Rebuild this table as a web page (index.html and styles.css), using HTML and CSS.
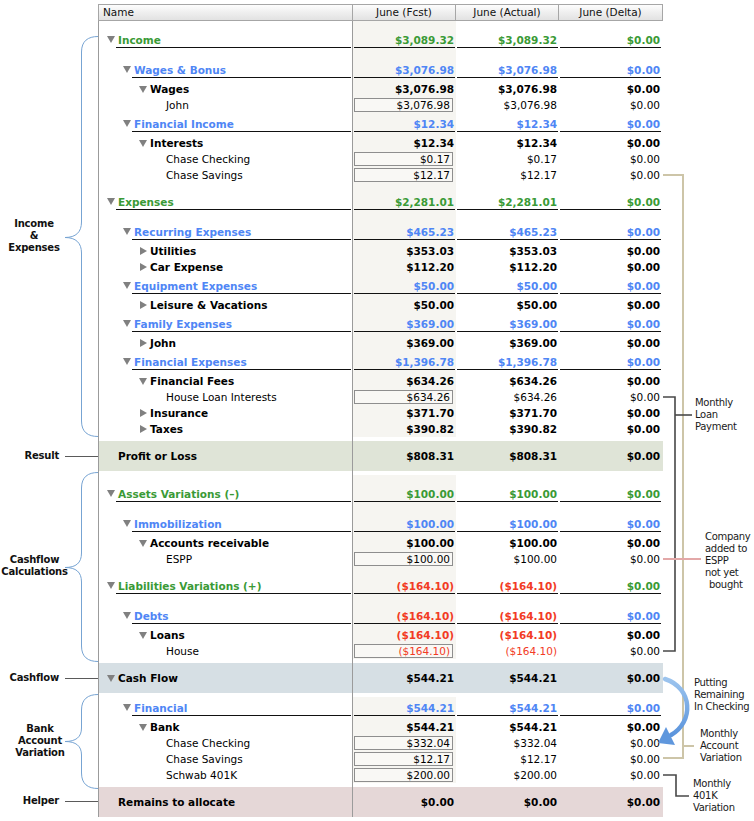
FILE: index.html
```html
<!DOCTYPE html>
<html lang="en">
<head>
<meta charset="utf-8">
<title>Budget</title>
<link rel="stylesheet" href="styles.css">
</head>
<body>
<div class="page">
  <div class="sheet">
    <div class="head">
      <div class="hc hn">Name</div>
      <div class="hc">June (Fcst)</div>
      <div class="hc">June (Actual)</div>
      <div class="hc hl">June (Delta)</div>
    </div>
    <div class="tbody">
      <div class="row u g grn"><div class="nm l0"><i class="tri dn"></i><div class="ul">Income</div></div><div class="v fc"><div class="ul">$3,089.32</div></div><div class="v"><div class="ul">$3,089.32</div></div><div class="v dl"><div class="ul">$0.00</div></div></div>
      <div class="row u blu"><div class="nm l1"><i class="tri dn"></i><div class="ul">Wages &amp; Bonus</div></div><div class="v fc"><div class="ul">$3,076.98</div></div><div class="v"><div class="ul">$3,076.98</div></div><div class="v dl"><div class="ul">$0.00</div></div></div>
      <div class="row n k"><div class="nm l2"><i class="tri dn"></i><div class="lb">Wages</div></div><div class="v fc">$3,076.98</div><div class="v">$3,076.98</div><div class="v dl">$0.00</div></div>
      <div class="row n"><div class="nm l3"><i class="sp"></i><div class="lb">John</div></div><div class="v fc"><div class="box">$3,076.98</div></div><div class="v">$3,076.98</div><div class="v dl">$0.00</div></div>
      <div class="row u blu"><div class="nm l1"><i class="tri dn"></i><div class="ul">Financial Income</div></div><div class="v fc"><div class="ul">$12.34</div></div><div class="v"><div class="ul">$12.34</div></div><div class="v dl"><div class="ul">$0.00</div></div></div>
      <div class="row n k"><div class="nm l2"><i class="tri dn"></i><div class="lb">Interests</div></div><div class="v fc">$12.34</div><div class="v">$12.34</div><div class="v dl">$0.00</div></div>
      <div class="row n"><div class="nm l3"><i class="sp"></i><div class="lb">Chase Checking</div></div><div class="v fc"><div class="box">$0.17</div></div><div class="v">$0.17</div><div class="v dl">$0.00</div></div>
      <div class="row n"><div class="nm l3"><i class="sp"></i><div class="lb">Chase Savings</div></div><div class="v fc"><div class="box">$12.17</div></div><div class="v">$12.17</div><div class="v dl">$0.00</div></div>

      <div class="row u g grn"><div class="nm l0"><i class="tri dn"></i><div class="ul">Expenses</div></div><div class="v fc"><div class="ul">$2,281.01</div></div><div class="v"><div class="ul">$2,281.01</div></div><div class="v dl"><div class="ul">$0.00</div></div></div>
      <div class="row u blu"><div class="nm l1"><i class="tri dn"></i><div class="ul">Recurring Expenses</div></div><div class="v fc"><div class="ul">$465.23</div></div><div class="v"><div class="ul">$465.23</div></div><div class="v dl"><div class="ul">$0.00</div></div></div>
      <div class="row n k"><div class="nm l2"><i class="tri rt"></i><div class="lb">Utilities</div></div><div class="v fc">$353.03</div><div class="v">$353.03</div><div class="v dl">$0.00</div></div>
      <div class="row n k"><div class="nm l2"><i class="tri rt"></i><div class="lb">Car Expense</div></div><div class="v fc">$112.20</div><div class="v">$112.20</div><div class="v dl">$0.00</div></div>
      <div class="row u blu"><div class="nm l1"><i class="tri dn"></i><div class="ul">Equipment Expenses</div></div><div class="v fc"><div class="ul">$50.00</div></div><div class="v"><div class="ul">$50.00</div></div><div class="v dl"><div class="ul">$0.00</div></div></div>
      <div class="row n k"><div class="nm l2"><i class="tri rt"></i><div class="lb">Leisure &amp; Vacations</div></div><div class="v fc">$50.00</div><div class="v">$50.00</div><div class="v dl">$0.00</div></div>
      <div class="row u blu"><div class="nm l1"><i class="tri dn"></i><div class="ul">Family Expenses</div></div><div class="v fc"><div class="ul">$369.00</div></div><div class="v"><div class="ul">$369.00</div></div><div class="v dl"><div class="ul">$0.00</div></div></div>
      <div class="row n k"><div class="nm l2"><i class="tri rt"></i><div class="lb">John</div></div><div class="v fc">$369.00</div><div class="v">$369.00</div><div class="v dl">$0.00</div></div>
      <div class="row u blu"><div class="nm l1"><i class="tri dn"></i><div class="ul">Financial Expenses</div></div><div class="v fc"><div class="ul">$1,396.78</div></div><div class="v"><div class="ul">$1,396.78</div></div><div class="v dl"><div class="ul">$0.00</div></div></div>
      <div class="row n k"><div class="nm l2"><i class="tri dn"></i><div class="lb">Financial Fees</div></div><div class="v fc">$634.26</div><div class="v">$634.26</div><div class="v dl">$0.00</div></div>
      <div class="row n"><div class="nm l3"><i class="sp"></i><div class="lb">House Loan Interests</div></div><div class="v fc"><div class="box">$634.26</div></div><div class="v">$634.26</div><div class="v dl">$0.00</div></div>
      <div class="row n k"><div class="nm l2"><i class="tri rt"></i><div class="lb">Insurance</div></div><div class="v fc">$371.70</div><div class="v">$371.70</div><div class="v dl">$0.00</div></div>
      <div class="row n k"><div class="nm l2"><i class="tri rt"></i><div class="lb">Taxes</div></div><div class="v fc">$390.82</div><div class="v">$390.82</div><div class="v dl">$0.00</div></div>

      <div class="row gap"><div class="nm"></div></div>
      <div class="row c profit"><div class="nm l0"><i class="sp"></i><div class="lb">Profit or Loss</div></div><div class="v">$808.31</div><div class="v">$808.31</div><div class="v dl">$0.00</div></div>
      <div class="row gap"><div class="nm"></div></div>

      <div class="row u g grn"><div class="nm l0"><i class="tri dn"></i><div class="ul">Assets Variations (–)</div></div><div class="v fc"><div class="ul">$100.00</div></div><div class="v"><div class="ul">$100.00</div></div><div class="v dl"><div class="ul">$0.00</div></div></div>
      <div class="row u blu"><div class="nm l1"><i class="tri dn"></i><div class="ul">Immobilization</div></div><div class="v fc"><div class="ul">$100.00</div></div><div class="v"><div class="ul">$100.00</div></div><div class="v dl"><div class="ul">$0.00</div></div></div>
      <div class="row n k"><div class="nm l2"><i class="tri dn"></i><div class="lb">Accounts receivable</div></div><div class="v fc">$100.00</div><div class="v">$100.00</div><div class="v dl">$0.00</div></div>
      <div class="row n"><div class="nm l3"><i class="sp"></i><div class="lb">ESPP</div></div><div class="v fc"><div class="box">$100.00</div></div><div class="v">$100.00</div><div class="v dl">$0.00</div></div>
      <div class="row u g grn"><div class="nm l0"><i class="tri dn"></i><div class="ul">Liabilities Variations (+)</div></div><div class="v fc red"><div class="ul">($164.10)</div></div><div class="v red"><div class="ul">($164.10)</div></div><div class="v dl"><div class="ul">$0.00</div></div></div>
      <div class="row u blu"><div class="nm l1"><i class="tri dn"></i><div class="ul">Debts</div></div><div class="v fc red"><div class="ul">($164.10)</div></div><div class="v red"><div class="ul">($164.10)</div></div><div class="v dl"><div class="ul">$0.00</div></div></div>
      <div class="row n k"><div class="nm l2"><i class="tri dn"></i><div class="lb">Loans</div></div><div class="v fc red">($164.10)</div><div class="v red">($164.10)</div><div class="v dl">$0.00</div></div>
      <div class="row n"><div class="nm l3"><i class="sp"></i><div class="lb">House</div></div><div class="v fc red"><div class="box">($164.10)</div></div><div class="v red">($164.10)</div><div class="v dl">$0.00</div></div>

      <div class="row gap"><div class="nm"></div></div>
      <div class="row c cash"><div class="nm l0"><i class="tri dn"></i><div class="lb">Cash Flow</div></div><div class="v">$544.21</div><div class="v">$544.21</div><div class="v dl">$0.00</div></div>
      <div class="row gap"><div class="nm"></div></div>

      <div class="row u blu"><div class="nm l1"><i class="tri dn"></i><div class="ul">Financial</div></div><div class="v fc"><div class="ul">$544.21</div></div><div class="v"><div class="ul">$544.21</div></div><div class="v dl"><div class="ul">$0.00</div></div></div>
      <div class="row n k"><div class="nm l2"><i class="tri dn"></i><div class="lb">Bank</div></div><div class="v fc">$544.21</div><div class="v">$544.21</div><div class="v dl">$0.00</div></div>
      <div class="row n"><div class="nm l3"><i class="sp"></i><div class="lb">Chase Checking</div></div><div class="v fc"><div class="box">$332.04</div></div><div class="v">$332.04</div><div class="v dl">$0.00</div></div>
      <div class="row n"><div class="nm l3"><i class="sp"></i><div class="lb">Chase Savings</div></div><div class="v fc"><div class="box">$12.17</div></div><div class="v">$12.17</div><div class="v dl">$0.00</div></div>
      <div class="row n"><div class="nm l3"><i class="sp"></i><div class="lb">Schwab 401K</div></div><div class="v fc"><div class="box">$200.00</div></div><div class="v">$200.00</div><div class="v dl">$0.00</div></div>

      <div class="row gap"><div class="nm"></div></div>
      <div class="row c remain"><div class="nm l0"><i class="sp"></i><div class="lb">Remains to allocate</div></div><div class="v">$0.00</div><div class="v">$0.00</div><div class="v dl">$0.00</div></div>
    </div>
  </div>

  <svg class="annot" width="754" height="821" viewBox="0 0 754 821" aria-hidden="true">
    <defs>
      <linearGradient id="arrowGrad" x1="0" y1="0" x2="0" y2="1">
        <stop offset="0" stop-color="#9cc4ee"/>
        <stop offset="1" stop-color="#5b94dc"/>
      </linearGradient>
    </defs>
    <g class="brace">
      <path d="M98,36.5 C88,36.5 81.5,41 81.5,52 L81.5,222 C81.5,232 76,237.5 65,237.5 C76,237.5 81.5,243 81.5,253 L81.5,421 C81.5,432 88,436.5 98,436.5"/>
      <path d="M98,472.5 C88,472.5 81.5,477 81.5,488 L81.5,553 C81.5,563 76,567.5 65,567.5 C76,567.5 81.5,572 81.5,582 L81.5,646 C81.5,657 88,661.5 98,661.5"/>
      <path d="M98,694.5 C88,694.5 81.5,699 81.5,710 L81.5,728 C81.5,737 76,741.5 65,741.5 C76,741.5 81.5,746 81.5,755 L81.5,773 C81.5,784 88,788.5 98,788.5"/>
    </g>
    <g class="tick">
      <line x1="65" y1="456.5" x2="98" y2="456.5"/>
      <line x1="65" y1="678.5" x2="98" y2="678.5"/>
      <line x1="65" y1="801.5" x2="98" y2="801.5"/>
    </g>
    <polyline class="tan" points="663,175 683,175 683,758 663,758"/>
    <line class="tan" x1="683" y1="746" x2="694" y2="746"/>
    <polyline class="dark" points="663,397 675,397 675,651 663,651"/>
    <line class="dark" x1="675" y1="415" x2="692" y2="415"/>
    <line class="pink" x1="663" y1="559" x2="701" y2="559"/>
    <polyline class="dark" points="663,775 676,775 676,796 689,796"/>
    <path class="arrow" d="M665,679 C693,688 694,722 671,735"/>
    <polygon class="arrowhead" points="658,743 675,745 666,727"/>
  </svg>

  <div class="lab lab-ie">Income<br>&amp;<br>Expenses</div>
  <div class="lab lab-one lab-res">Result</div>
  <div class="lab lab-cc">Cashflow<br>Calculations</div>
  <div class="lab lab-one lab-cf">Cashflow</div>
  <div class="lab lab-bank">Bank<br>Account<br>Variation</div>
  <div class="lab lab-one lab-help">Helper</div>

  <div class="note n-loan">Monthly<br>Loan<br>Payment</div>
  <div class="note n-espp">Company<br>added to<br>ESPP<br>not yet<br><span class="ind">bought</span></div>
  <div class="note n-put">Putting<br>Remaining<br>In Checking</div>
  <div class="note n-acct">Monthly<br>Account<br>Variation</div>
  <div class="note n-401k">Monthly<br>401K<br>Variation</div>
</div>
</body>
</html>
```

FILE: styles.css
```css
* { box-sizing: border-box; }

body {
  margin: 0;
  background: #ffffff;
  font-family: "DejaVu Sans", "Liberation Sans", sans-serif;
  font-size: 10.5px;
  color: #000;
}

.page {
  position: relative;
  width: 754px;
  height: 821px;
  overflow: hidden;
}

.sheet {
  margin-left: 98px;
  padding-top: 4px;
  width: 565px;
}

/* header */
.head {
  display: grid;
  grid-template-columns: 254px 103px 103px 104px;
  height: 17px;
  border: 1px solid #a6a6a6;
  border-right: none;
  background: linear-gradient(#fdfdfd, #f0f0f0 45%, #e2e2e2);
}
.hc {
  line-height: 15px;
  text-align: center;
  border-right: 1px solid #a6a6a6;
  color: #111;
}
.hn { text-align: left; padding-left: 4px; }

/* body */
.tbody {
  border-left: 1px solid #9b9b9b;
}
.row {
  display: grid;
  grid-template-columns: 254px 103px 103px 104px;
}
.nm {
  display: flex;
  border-right: 1px solid #9b9b9b;
  min-width: 0;
  white-space: nowrap;
}
.l0 { padding-left: 8px; }
.l1 { padding-left: 24px; }
.l2 { padding-left: 40px; }
.l3 { padding-left: 56px; }

.tri { display: block; flex: none; width: 0; height: 0; }
.tri.dn {
  border-left: 4px solid transparent;
  border-right: 4px solid transparent;
  border-top: 7px solid #808080;
}
.tri.rt {
  border-top: 4px solid transparent;
  border-bottom: 4px solid transparent;
  border-left: 7px solid #808080;
  margin-left: 1px;
}
.sp { display: block; flex: none; width: 8px; }

.lb { padding-left: 3px; }

.v {
  text-align: right;
  white-space: nowrap;
}
.fc { background: #f6f5f1; }

/* normal rows */
.n { height: 16px; line-height: 16px; }
.n .nm { align-items: center; }
.n .v { padding-right: 2px; }
.n .v.dl { padding-right: 3px; }
.k { font-weight: bold; }

/* underlined group rows */
.u { height: 22px; font-weight: bold; }
.u .nm { align-items: flex-start; }
.u .tri { margin-top: 7px; }
.ul {
  height: 19px;
  padding-top: 4px;
  line-height: 14px;
  border-bottom: 1px solid #111;
}
.nm .ul { flex: 1; margin-left: 1px; padding-left: 2px; margin-right: 1px; }
.v .ul { margin: 0 1px; padding-right: 1px; }
.v.dl .ul { margin-right: 2px; }

.g { height: 38px; }
.g .nm, .g .v { padding-top: 8px; }

.grn { color: #3a9a36; }
.blu { color: #4f86f5; }
.red, .row .red { color: #f23b24; }
.n .dl { color: #000; }
.grn .v.dl { color: #3a9a36; }
.blu .v.dl { color: #4f86f5; }

/* input boxes */
.box {
  margin: 1px 1px 0;
  height: 14px;
  line-height: 12px;
  border: 1px solid #8e8e8e;
  background: #f9f8f5;
  padding-right: 2px;
}

/* gap + coloured rows */
.gap { height: 4px; }
.c { height: 30px; line-height: 30px; font-weight: bold; }
.c .nm { align-items: center; }
.c .v { padding-right: 2px; }
.c .v.dl { padding-right: 3px; }
.profit { background: #dfe4d7; }
.cash { background: #d6dfe4; }
.remain { background: #e5d7d7; }

/* annotation overlay */
.annot {
  position: absolute;
  left: 0;
  top: 0;
  pointer-events: none;
}
.brace path { fill: none; stroke: #77a4d3; stroke-width: 1; }
.tick line { stroke: #5a5a5a; stroke-width: 1; }
.tan { fill: none; stroke: #cdc5a8; stroke-width: 2; }
.dark { fill: none; stroke: #484848; stroke-width: 1.6; }
.pink { stroke: #e3a8a8; stroke-width: 2; }
.arrow { fill: none; stroke: url(#arrowGrad); stroke-width: 4.5; stroke-linecap: round; }
.arrowhead { fill: #5f97dd; }

.lab {
  position: absolute;
  font-weight: bold;
  font-size: 10px;
  letter-spacing: -0.2px;
  line-height: 12px;
  text-align: center;
  color: #111;
  white-space: nowrap;
}
.lab-one { left: 0; width: 59px; text-align: right; }
.lab-ie { left: 0; width: 68px; top: 218px; }
.lab-res { top: 450px; }
.lab-cc { left: 0; width: 69px; top: 554px; }
.lab-cf { top: 672px; }
.lab-bank { left: 0; width: 80px; top: 723px; }
.lab-help { top: 795px; }

.note {
  position: absolute;
  font-size: 10px;
  letter-spacing: -0.3px;
  line-height: 12px;
  color: #1a1a1a;
  white-space: nowrap;
}
.n-loan { left: 695px; top: 397px; }
.n-espp { left: 705px; top: 531px; }
.n-espp .ind { padding-left: 4px; }
.n-put { left: 694px; top: 677px; }
.n-acct { left: 700px; top: 728px; }
.n-401k { left: 693px; top: 778px; }
```
